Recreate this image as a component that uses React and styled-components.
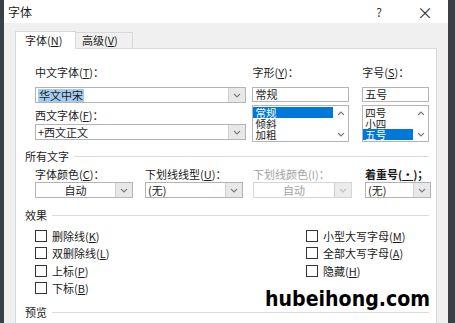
import React from 'react';
import styled, { createGlobalStyle } from 'styled-components';

const Global = createGlobalStyle`
  html, body { margin: 0; padding: 0; }
  body {
    font-family: "Noto Sans CJK SC", "Noto Sans", "Liberation Sans", sans-serif;
    font-size: 11px;
    color: #1b1b1b;
  }
`;

const Screen = styled.div`
  width: 455px;
  height: 323px;
  display: flex;
  background: #3b4046;
  overflow: hidden;
`;

const Dialog = styled.div`
  margin-left: 4px;
  width: 444px;
  display: flex;
  flex-direction: column;
  background: #f0f0f0;
`;

const TitleBar = styled.div`
  height: 23px;
  flex: none;
  background: #fff;
  display: flex;
  align-items: center;
  padding-left: 4px;
  font-size: 12px;
`;

const TitleText = styled.div`
  flex: 1;
`;

const TitleButton = styled.div`
  width: ${p => p.$w}px;
  margin-left: ${p => p.$ml || 0}px;
  margin-right: ${p => p.$mr || 0}px;
  text-align: center;
  font-size: ${p => p.$size}px;
  color: #333;
  line-height: 14px;
`;

const Body = styled.div`
  flex: 1;
  display: flex;
  flex-direction: column;
  padding: 7px 11px 0 11px;
`;

const TabRow = styled.div`
  height: 18px;
  display: flex;
  align-items: flex-end;
  flex: none;
`;

const Tab = styled.div`
  width: ${p => p.$w}px;
  height: ${p => (p.$active ? 18 : 16)}px;
  box-sizing: border-box;
  border: 1px solid #d9d9d9;
  border-bottom: none;
  border-left: ${p => (p.$active ? '1px solid #d9d9d9' : 'none')};
  background: ${p => (p.$active ? '#fff' : '#f0f0f0')};
  padding-left: ${p => (p.$active ? 9 : 6)}px;
  line-height: ${p => (p.$active ? 16 : 14)}px;
  font-size: 11px;
  position: relative;
  z-index: ${p => (p.$active ? 1 : 0)};
  margin-bottom: ${p => (p.$active ? -1 : 0)}px;
`;

const Panel = styled.div`
  flex: 1;
  background: #fff;
  border: 1px solid #d9d9d9;
  border-bottom: none;
  padding: 16px 7px 0 19px;
  position: relative;
`;

const TopGrid = styled.div`
  display: flex;
`;

const Column = styled.div`
  width: ${p => p.$w}px;
  margin-right: ${p => p.$gap || 0}px;
  display: flex;
  flex-direction: column;
`;

const Label = styled.div`
  height: 14px;
  line-height: 14px;
  white-space: nowrap;
  margin-top: ${p => p.$mt || 0}px;
  margin-bottom: ${p => p.$mb || 0}px;
  color: ${p => (p.$disabled ? '#a3a3a3' : '#1b1b1b')};
  font-weight: ${p => (p.$bold ? 600 : 400)};
`;

const Combo = styled.div`
  height: ${p => p.$h || 16}px;
  box-sizing: border-box;
  border: 1px solid ${p => (p.$disabled ? '#d6d6d6' : '#b4b4b4')};
  display: flex;
  background: #fff;
  margin-top: ${p => p.$mt || 0}px;
`;

const ComboText = styled.div`
  flex: 1;
  padding-left: ${p => (p.$center ? 0 : 2)}px;
  display: flex;
  align-items: center;
  justify-content: ${p => (p.$center ? 'center' : 'flex-start')};
  color: ${p => (p.$disabled ? '#a3a3a3' : '#1b1b1b')};
  line-height: 13px;
`;

const Sel = styled.span`
  background: #a6cdef;
  padding: 0 1px;
`;

const ArrowBox = styled.div`
  width: 16px;
  flex: none;
  background: ${p => (p.$disabled ? '#ececec' : '#e8e8e8')};
  border-left: 1px solid #d0d0d0;
  display: flex;
  align-items: center;
  justify-content: center;
`;

const ListBox = styled.div`
  height: 37px;
  box-sizing: border-box;
  border: 1px solid #b4b4b4;
  margin-top: 3px;
  display: flex;
`;

const ListItems = styled.div`
  flex: 1;
  padding-top: 1px;
  display: flex;
  flex-direction: column;
`;

const ListItem = styled.div`
  height: 11px;
  line-height: 11px;
  font-size: 10.5px;
  padding-left: 2px;
  background: ${p => (p.$sel ? '#0078d7' : 'transparent')};
  color: ${p => (p.$sel ? '#fff' : '#1b1b1b')};
`;

const ScrollCol = styled.div`
  width: 15px;
  flex: none;
  display: flex;
  flex-direction: column;
  justify-content: space-between;
  align-items: center;
  padding: 5px 0 4px;
`;

const Header = styled.div`
  display: flex;
  align-items: center;
  height: 14px;
  line-height: 14px;
  margin-left: -10px;
  margin-top: ${p => p.$mt || 0}px;
  &::after {
    content: '';
    flex: 1;
    height: 1px;
    background: #dcdcdc;
    margin-left: 5px;
  }
`;

const DropRow = styled.div`
  display: grid;
  grid-template-columns: 98px 98px 97px 67px;
  column-gap: 12px;
  margin-top: 4px;
  & > :nth-child(3) { margin-left: -2px; }
  & > :nth-child(4) { margin-left: 1px; }
`;

const Cell = styled.div`
  display: flex;
  flex-direction: column;
`;

const Checks = styled.div`
  display: grid;
  grid-template-columns: 271px 1fr;
  margin-top: 5px;
`;

const CheckCol = styled.div`
  display: flex;
  flex-direction: column;
`;

const CheckRow = styled.div`
  height: 17.5px;
  display: flex;
  align-items: center;
`;

const Box = styled.div`
  width: 12px;
  height: 12px;
  box-sizing: border-box;
  border: 1px solid #333;
  background: #fff;
  margin-right: 5px;
`;

const Watermark = styled.div`
  position: absolute;
  left: 249px;
  top: 237px;
  font-family: "DejaVu Sans", sans-serif;
  font-weight: 700;
  font-size: 19px;
  color: #000;
  transform: scaleY(1.1);
  transform-origin: left top;
`;

const Chevron = ({ up, color = '#7a7a7a' }) => (
  <svg width="8" height="5" viewBox="0 0 8 5">
    <path
      d={up ? 'M1 4 L4 1 L7 4' : 'M1 1 L4 4 L7 1'}
      fill="none"
      stroke={color}
      strokeWidth="1.1"
    />
  </svg>
);

const K = ({ k }) => <>(<u>{k}</u>)</>;

const Drop = ({ value, center, highlight, disabled, mt }) => (
  <Combo $disabled={disabled} $mt={mt}>
    <ComboText $center={center} $disabled={disabled}>
      {highlight ? <Sel>{value}</Sel> : value}
    </ComboText>
    <ArrowBox $disabled={disabled}>
      <Chevron color={disabled ? '#c4c4c4' : '#7a7a7a'} />
    </ArrowBox>
  </Combo>
);

const List = ({ items, selected }) => (
  <ListBox>
    <ListItems>
      {items.map((it, i) => (
        <ListItem key={it} $sel={i === selected}>{it}</ListItem>
      ))}
    </ListItems>
    <ScrollCol>
      <Chevron up />
      <Chevron />
    </ScrollCol>
  </ListBox>
);

const Check = ({ children }) => (
  <CheckRow>
    <Box />
    {children}
  </CheckRow>
);

export default function App() {
  return (
    <Screen>
      <Global />
      <Dialog>
        <TitleBar>
          <TitleText>字体</TitleText>
          <TitleButton $w={16} $size={12}>?</TitleButton>
          <TitleButton $w={28} $size={16} $ml={24} $mr={9}>×</TitleButton>
        </TitleBar>
        <Body>
          <TabRow>
            <Tab $active $w={61}>字体<K k="N" /></Tab>
            <Tab $w={57}>高级<K k="V" /></Tab>
          </TabRow>
          <Panel>
            <TopGrid>
              <Column $w={212} $gap={6}>
                <Label $mb={8}>中文字体<K k="T" />：</Label>
                <Drop value="华文中宋" highlight />
                <Label $mt={5}>西文字体<K k="F" />：</Label>
                <Drop value="+西文正文" mt={2} />
              </Column>
              <Column $w={97} $gap={13}>
                <Label $mb={8}>字形<K k="Y" />：</Label>
                <Combo $h={15}><ComboText>常规</ComboText></Combo>
                <List items={['常规', '倾斜', '加粗']} selected={0} />
              </Column>
              <Column $w={67}>
                <Label $mb={8}>字号<K k="S" />：</Label>
                <Combo $h={15}><ComboText>五号</ComboText></Combo>
                <List items={['四号', '小四', '五号']} selected={2} />
              </Column>
            </TopGrid>

            <Header $mt={7}>所有文字</Header>
            <DropRow>
              <Cell>
                <Label $mb={1}>字体颜色<K k="C" />：</Label>
                <Drop value="自动" center />
              </Cell>
              <Cell>
                <Label $mb={1}>下划线线型<K k="U" />：</Label>
                <Drop value="(无)" />
              </Cell>
              <Cell>
                <Label $mb={1} $disabled>下划线颜色(I)：</Label>
                <Drop value="自动" center disabled />
              </Cell>
              <Cell>
                <Label $mb={1} $bold>着重号(<u>·</u>)；</Label>
                <Drop value="(无)" />
              </Cell>
            </DropRow>

            <Header $mt={10}>效果</Header>
            <Checks>
              <CheckCol>
                <Check>删除线<K k="K" /></Check>
                <Check>双删除线<K k="L" /></Check>
                <Check>上标<K k="P" /></Check>
                <Check>下标<K k="B" /></Check>
              </CheckCol>
              <CheckCol>
                <Check>小型大写字母<K k="M" /></Check>
                <Check>全部大写字母<K k="A" /></Check>
                <Check>隐藏<K k="H" /></Check>
              </CheckCol>
            </Checks>
            <Header $mt={8}>预览</Header>
            <Watermark>hubeihong.com</Watermark>
          </Panel>
        </Body>
      </Dialog>
    </Screen>
  );
}
